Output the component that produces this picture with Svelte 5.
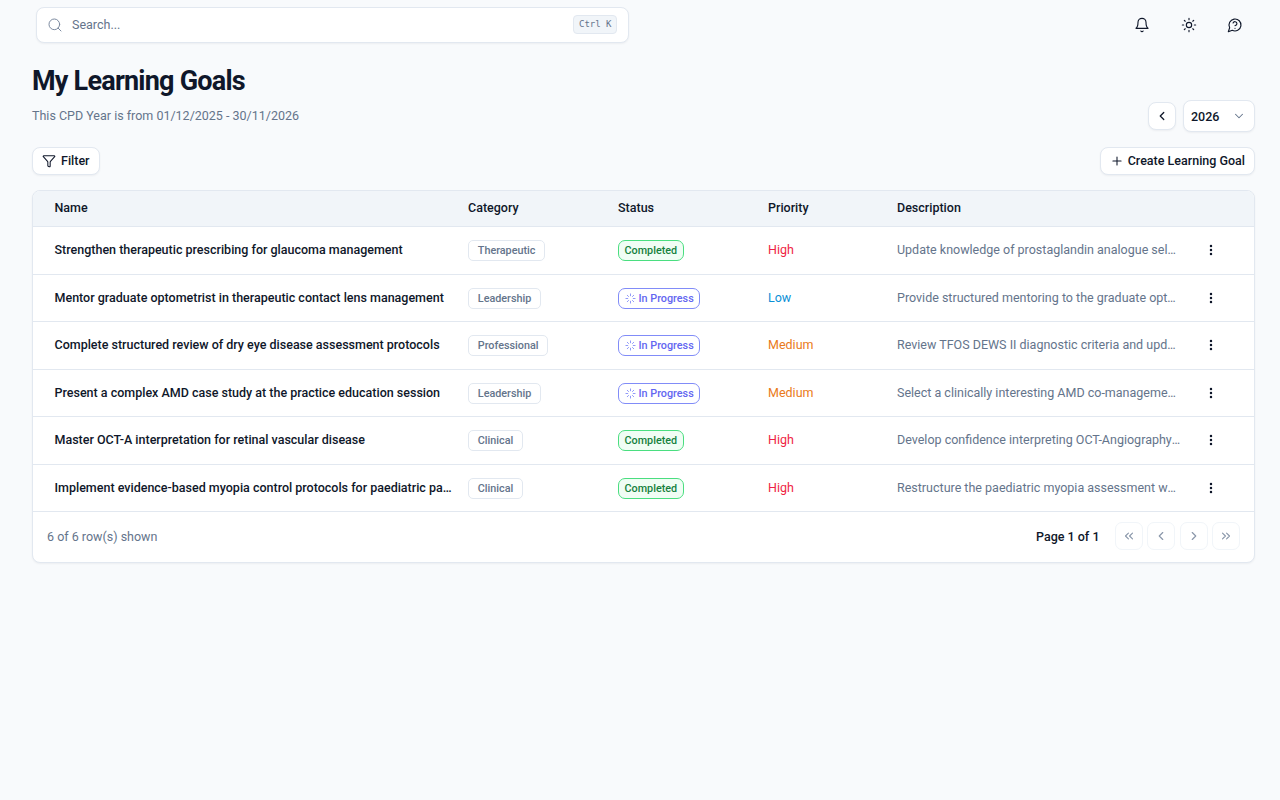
<script lang="ts">
	const goals = [
		{ name: 'Strengthen therapeutic prescribing for glaucoma management', category: 'Therapeutic', status: 'Completed', priority: 'High', description: 'Update knowledge of prostaglandin analogue selection and adjunctive therapy' },
		{ name: 'Mentor graduate optometrist in therapeutic contact lens management', category: 'Leadership', status: 'In Progress', priority: 'Low', description: 'Provide structured mentoring to the graduate optometrist over the year' },
		{ name: 'Complete structured review of dry eye disease assessment protocols', category: 'Professional', status: 'In Progress', priority: 'Medium', description: 'Review TFOS DEWS II diagnostic criteria and update practice protocols' },
		{ name: 'Present a complex AMD case study at the practice education session', category: 'Leadership', status: 'In Progress', priority: 'Medium', description: 'Select a clinically interesting AMD co-management case and prepare slides' },
		{ name: 'Master OCT-A interpretation for retinal vascular disease', category: 'Clinical', status: 'Completed', priority: 'High', description: 'Develop confidence interpreting OCT-Angiography scans in vascular disease' },
		{ name: 'Implement evidence-based myopia control protocols for paediatric patients', category: 'Clinical', status: 'Completed', priority: 'High', description: 'Restructure the paediatric myopia assessment workflow for the practice' }
	];
</script>

<div class="page">
	<header class="topbar">
		<div class="search">
			<svg class="search-icon" viewBox="0 0 24 24"><circle cx="11" cy="11" r="8" /><path d="m21 21-4.3-4.3" /></svg>
			<span class="search-text">Search...</span>
			<kbd>Ctrl K</kbd>
		</div>
		<div class="top-icons">
			<svg viewBox="0 0 24 24"><path d="M10.3 21a1.94 1.94 0 0 0 3.4 0" /><path d="M6 8a6 6 0 0 1 12 0c0 7 3 9 3 9H3s3-2 3-9" /></svg>
			<svg viewBox="0 0 24 24"><circle cx="12" cy="12" r="4" /><path d="M12 2v2M12 20v2M4.93 4.93l1.41 1.41M17.66 17.66l1.41 1.41M2 12h2M20 12h2M6.34 17.66l-1.41 1.41M19.07 4.93l-1.41 1.41" /></svg>
			<svg viewBox="0 0 24 24"><path d="M7.9 20A9 9 0 1 0 4 16.1L2 22Z" /><path d="M9.09 9a3 3 0 0 1 5.83 1c0 2-3 3-3 3" /><path d="M12 17h.01" /></svg>
		</div>
	</header>

	<main class="content">
		<h1>My Learning Goals</h1>
		<div class="year-row">
			<p>This CPD Year is from 01/12/2025 - 30/11/2026</p>
			<div class="year-nav">
				<button class="btn icon-btn"><svg viewBox="0 0 24 24"><path d="m15 18-6-6 6-6" /></svg></button>
				<button class="btn year-select">
					<span>2026</span>
					<svg viewBox="0 0 24 24"><path d="m6 9 6 6 6-6" /></svg>
				</button>
			</div>
		</div>

		<div class="actions">
			<button class="btn action filter"><svg viewBox="0 0 24 24"><path d="M10 20a1 1 0 0 0 .55.9l2 1A1 1 0 0 0 14 21v-7a2 2 0 0 1 .52-1.34L21.74 4.67A1 1 0 0 0 21 3H3a1 1 0 0 0-.74 1.67l7.22 7.99A2 2 0 0 1 10 14Z" /></svg>Filter</button>
			<button class="btn action"><svg viewBox="0 0 24 24"><path d="M5 12h14M12 5v14" /></svg>Create Learning Goal</button>
		</div>

		<section class="card">
			<table>
				<colgroup>
					<col style="width: 427px" />
					<col style="width: 150px" />
					<col style="width: 150px" />
					<col style="width: 129px" />
					<col style="width: 300px" />
					<col />
				</colgroup>
				<thead>
					<tr>
						<th class="name-col">Name</th>
						<th>Category</th>
						<th>Status</th>
						<th>Priority</th>
						<th>Description</th>
						<th></th>
					</tr>
				</thead>
				<tbody>
					{#each goals as goal}
						<tr>
							<td class="name-col name">{goal.name}</td>
							<td class="pill-cell"><span class="category">{goal.category}</span></td>
							<td class="pill-cell">
								{#if goal.status === 'Completed'}
									<span class="status done">Completed</span>
								{:else}
									<span class="status progress">
										<svg viewBox="0 0 24 24"><path d="M12 2v4M12 18v4M4.93 4.93l2.83 2.83M16.24 16.24l2.83 2.83M2 12h4M18 12h4M4.93 19.07l2.83-2.83M16.24 7.76l2.83-2.83" /></svg>
										In Progress
									</span>
								{/if}
							</td>
							<td class="priority {goal.priority.toLowerCase()}">{goal.priority}</td>
							<td class="desc">{goal.description}</td>
							<td class="more">
								<svg viewBox="0 0 24 24"><circle cx="12" cy="5" r="2.1" /><circle cx="12" cy="12" r="2.1" /><circle cx="12" cy="19" r="2.1" /></svg>
							</td>
						</tr>
					{/each}
				</tbody>
			</table>

			<footer class="pager">
				<span class="count">6 of 6 row(s) shown</span>
				<div class="pages">
					<span class="page-label">Page 1 of 1</span>
					<div class="page-btns">
						<button class="page-btn"><svg viewBox="0 0 24 24"><path d="m11 17-5-5 5-5M18 17l-5-5 5-5" /></svg></button>
						<button class="page-btn"><svg viewBox="0 0 24 24"><path d="m15 18-6-6 6-6" /></svg></button>
						<button class="page-btn"><svg viewBox="0 0 24 24"><path d="m9 18 6-6-6-6" /></svg></button>
						<button class="page-btn"><svg viewBox="0 0 24 24"><path d="m6 17 5-5-5-5M13 17l5-5-5-5" /></svg></button>
					</div>
				</div>
			</footer>
		</section>
	</main>
</div>

<style>
	:global(body) {
		margin: 0;
		background: #f8fafc;
		font-family: Roboto, "Liberation Sans", sans-serif;
		color: #0f172a;
	}

	svg {
		fill: none;
		stroke: currentColor;
		stroke-width: 2;
		stroke-linecap: round;
		stroke-linejoin: round;
		flex: none;
	}

	.page {
		min-height: 800px;
		box-sizing: border-box;
		padding: 7px 25px 0 32px;
	}

	.topbar {
		display: flex;
		justify-content: space-between;
		align-items: center;
		padding-left: 4px;
	}

	.search {
		width: 593px;
		height: 36px;
		box-sizing: border-box;
		display: flex;
		align-items: center;
		padding: 0 11px 1px 10px;
		background: #fff;
		border: 1px solid #e2e8f0;
		border-radius: 8px;
		box-shadow: 0 1px 2px rgba(15, 23, 42, 0.05);
	}

	.search-icon {
		width: 16px;
		height: 16px;
		color: #7c8aa0;
		stroke-width: 1.5;
		margin-right: 9px;
	}

	.search-text {
		flex: 1;
		font-size: 12.5px;
		color: #64748b;
	}

	kbd {
		font-family: "DejaVu Sans Mono", "Liberation Mono", monospace;
		font-size: 9px;
		color: #64748b;
		background: #f1f5f9;
		border: 1px solid #e2e8f0;
		border-radius: 4px;
		padding: 3px 4.5px;
		line-height: 11px;
	}

	.top-icons {
		display: flex;
		gap: 30.5px;
		padding-right: 12px;
		color: #0f172a;
		margin-top: -1px;
	}

	.top-icons svg {
		width: 16px;
		height: 16px;
		stroke-width: 1.7;
	}

	h1 {
		margin: 21px 0 0;
		font-size: 27px;
		line-height: 34px;
		font-weight: 700;
		letter-spacing: -0.78px;
		color: #0f172a;
	}

	.year-row {
		display: flex;
		justify-content: space-between;
		align-items: center;
		height: 32px;
		margin-top: 2px;
	}

	.year-row p {
		margin: 0 0 2px;
		font-size: 12.5px;
		color: #64748b;
	}

	.year-nav {
		display: flex;
		gap: 7px;
		align-items: center;
	}

	.btn {
		display: inline-flex;
		align-items: center;
		box-sizing: border-box;
		background: #fff;
		border: 1px solid #e2e8f0;
		border-radius: 8px;
		font: 500 12.5px Roboto, sans-serif;
		color: #0f172a;
		box-shadow: 0 1px 2px rgba(15, 23, 42, 0.05);
		padding: 0;
	}

	.icon-btn {
		width: 28px;
		height: 28px;
		justify-content: center;
	}

	.icon-btn svg {
		width: 14px;
		height: 14px;
		stroke-width: 2.2;
	}

	.year-select {
		width: 72px;
		height: 32px;
		padding: 0 8px 0 7px;
		justify-content: space-between;
	}

	.year-select svg {
		width: 14px;
		height: 14px;
		color: #64748b;
		stroke-width: 1.8;
	}

	.actions {
		display: flex;
		justify-content: space-between;
		margin-top: 15px;
	}

	.action {
		height: 28px;
		padding: 0 9px 1px;
		gap: 4px;
	}

	.action.filter {
		gap: 5px;
	}

	.action svg {
		width: 14px;
		height: 14px;
		stroke-width: 1.8;
	}

	.card {
		margin-top: 15px;
		background: #fff;
		border: 1px solid #e2e8f0;
		border-radius: 8px;
		box-shadow: 0 1px 2px rgba(15, 23, 42, 0.05);
		overflow: hidden;
	}

	table {
		width: 100%;
		table-layout: fixed;
		border-collapse: collapse;
	}

	th {
		height: 33px;
		padding: 0 8px 2px;
		background: #f1f5f9;
		border-bottom: 1px solid #e2e8f0;
		text-align: left;
		font-size: 12.5px;
		font-weight: 500;
		color: #0f172a;
	}

	td {
		height: 45.5px;
		padding: 0 8px 1px;
		font-size: 12.5px;
		border-bottom: 1px solid #e2e8f0;
		white-space: nowrap;
		overflow: hidden;
		text-overflow: ellipsis;
	}

	td.pill-cell {
		padding: 1px 8px 0;
	}

	.name-col {
		padding-left: 21.5px;
	}

	.name {
		font-weight: 500;
		color: #0f172a;
	}

	.category {
		display: inline-block;
		padding: 0 8.8px;
		height: 19px;
		line-height: 19px;
		font-size: 10.8px;
		font-weight: 500;
		color: #64748b;
		border: 1px solid #e2e8f0;
		border-radius: 5px;
		vertical-align: middle;
	}

	.status {
		display: inline-flex;
		align-items: center;
		gap: 3px;
		height: 19px;
		padding: 0 5.5px;
		font-size: 10.8px;
		font-weight: 500;
		border-radius: 7px;
		border: 1px solid;
		vertical-align: middle;
	}

	.status svg {
		width: 11px;
		height: 11px;
		stroke-width: 1.9;
		color: #818cf8;
	}

	.done {
		color: #15803d;
		background: #f0fdf4;
		border-color: #4ade80;
	}

	.progress {
		color: #6366f1;
		border-color: #818cf8;
		background: #fff;
	}

	.priority.high { color: #ef1f45; }
	.priority.low { color: #0b8fd6; }
	.priority.medium { color: #ea7a1a; }

	.desc {
		color: #64748b;
	}

	.more {
		padding: 0;
		text-align: center;
		line-height: 0;
		padding-right: 22px;
	}

	.more svg {
		width: 14px;
		height: 14px;
		fill: #0f172a;
		stroke: none;
	}

	.pager {
		height: 50px;
		box-sizing: border-box;
		display: flex;
		justify-content: space-between;
		align-items: center;
		padding: 0 14px 2px;
	}

	.count {
		font-size: 12.5px;
		color: #64748b;
	}

	.pages {
		display: flex;
		align-items: center;
		gap: 15px;
	}

	.page-label {
		font-size: 12.5px;
		font-weight: 500;
		color: #0f172a;
	}

	.page-btns {
		display: flex;
		gap: 4.5px;
	}

	.page-btn {
		width: 28px;
		height: 28px;
		padding: 0;
		display: flex;
		align-items: center;
		justify-content: center;
		background: #fff;
		border: 1px solid #f1f5f9;
		border-radius: 7px;
		color: #8b98ab;
	}

	.page-btn svg {
		width: 14px;
		height: 14px;
	}
</style>
